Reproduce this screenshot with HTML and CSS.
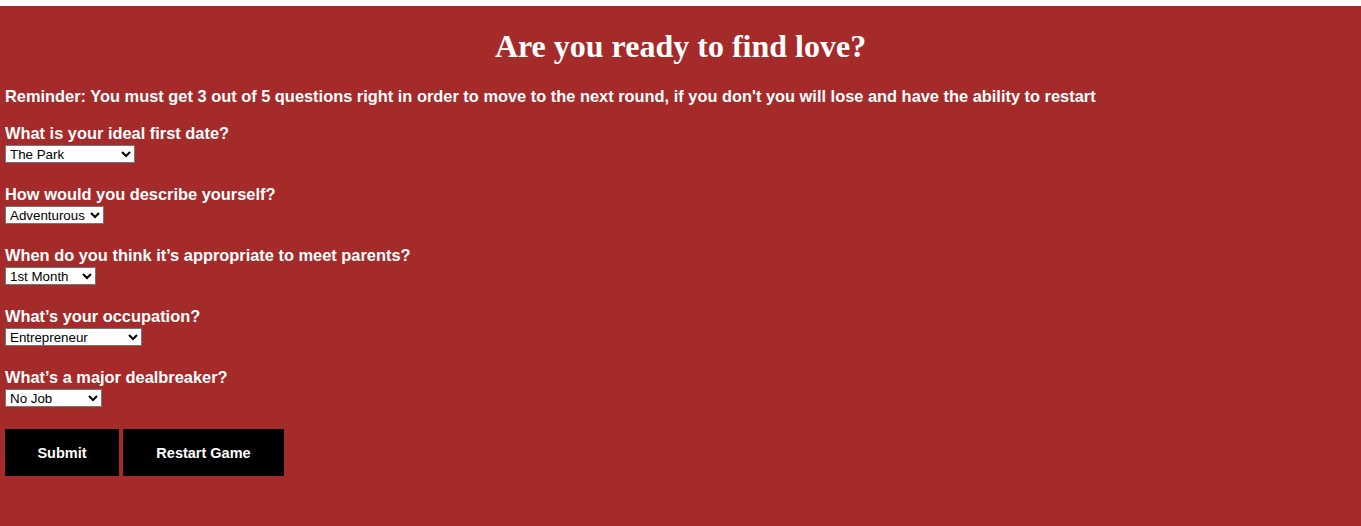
FILE: index.html
```html
<!DOCTYPE html>
<html>
<head>
<meta charset="utf-8">
<link rel="stylesheet" href="styles.css">
</head>
<body>
<div class="page">
  <h1 class="title">Are you ready to find love?</h1>
  <p class="reminder">Reminder: You must get 3 out of 5 questions right in order to move to the next round, if you don't you will lose and have the ability to restart</p>
  <form class="quiz">
    <div class="question">
      <label class="q-label">What is your ideal first date?</label>
      <select class="q-select w1"><option>The Park</option></select>
    </div>
    <div class="question">
      <label class="q-label">How would you describe yourself?</label>
      <select class="q-select w2"><option>Adventurous</option></select>
    </div>
    <div class="question">
      <label class="q-label">When do you think it’s appropriate to meet parents?</label>
      <select class="q-select w3"><option>1st Month</option></select>
    </div>
    <div class="question">
      <label class="q-label">What’s your occupation?</label>
      <select class="q-select w4"><option>Entrepreneur</option></select>
    </div>
    <div class="question">
      <label class="q-label">What’s a major dealbreaker?</label>
      <select class="q-select w5"><option>No Job</option></select>
    </div>
    <div class="actions">
      <button type="button" class="btn btn-submit">Submit</button>
      <button type="button" class="btn btn-restart">Restart Game</button>
    </div>
  </form>
</div>
</body>
</html>
```
FILE: styles.css
```css
html { background: #ffffff; }
body {
  margin: 0;
  padding-top: 6px;
  background: #ffffff;
}
.page {
  background: #a52a2a;
  min-height: 520px;
  padding: 1px 5px 0 5px;
  color: #ffffff;
  font-family: "Liberation Sans", Arial, sans-serif;
}
.title {
  font-family: "Liberation Serif", "Times New Roman", serif;
  font-size: 32px;
  font-weight: bold;
  text-align: center;
  margin: 21px 0 0 0;
  line-height: 37px;
}
.reminder {
  font-size: 16.4px;
  font-weight: bold;
  margin: 22px 0 0 0;
  line-height: 19px;
}
.quiz { margin-top: 18px; }
.question {
  display: flex;
  flex-direction: column;
  align-items: flex-start;
  margin-bottom: 22px;
}
.q-label {
  font-size: 16.4px;
  font-weight: bold;
  line-height: 19px;
  margin-bottom: 2px;
}
.q-select {
  height: 18px;
  font-family: "Liberation Sans", Arial, sans-serif;
  font-size: 13.33px;
  border: 1px solid #767676;
  background: #ffffff;
  color: #000;
  padding: 0;
  border-radius: 0;
}
.w1 { width: 130px; }
.w2 { width: 99px; }
.w3 { width: 91px; }
.w4 { width: 137px; }
.w5 { width: 97px; }
.actions {
  display: flex;
  gap: 4px;
  margin-top: 0;
}
.btn {
  height: 47px;
  border: none;
  background: #000000;
  color: #ffffff;
  font-family: "Liberation Sans", Arial, sans-serif;
  font-size: 14.5px;
  font-weight: bold;
  padding: 0;
}
.btn-submit { width: 114px; }
.btn-restart { width: 161px; }
```
